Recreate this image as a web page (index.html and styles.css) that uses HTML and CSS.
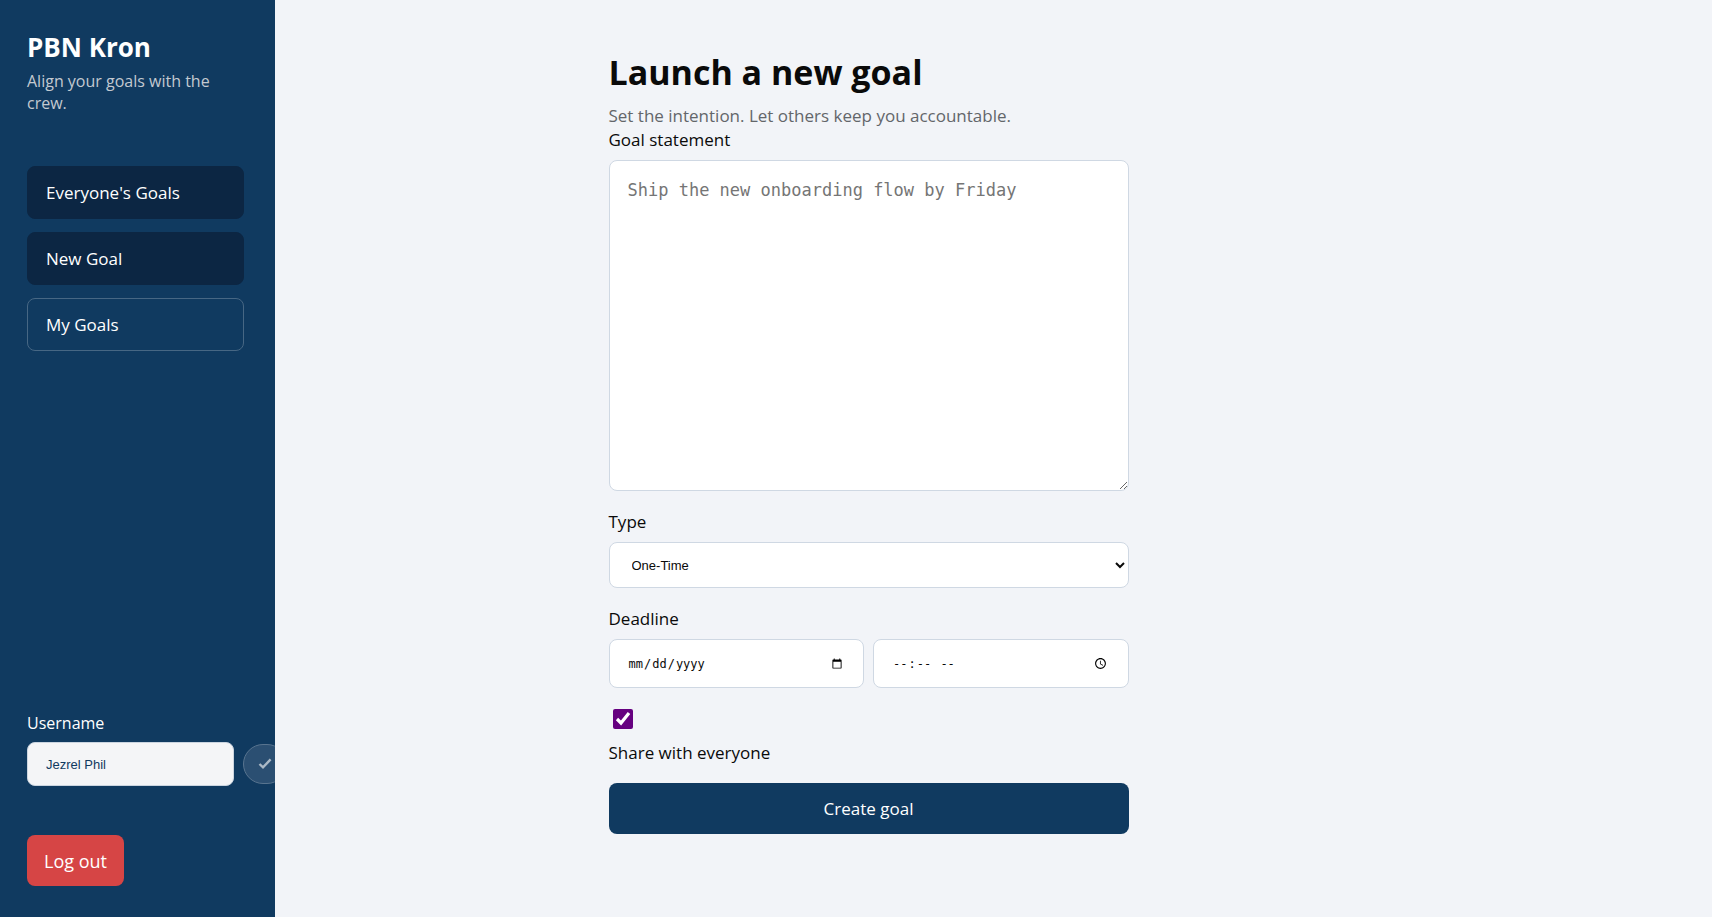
FILE: index.html
```html
<!DOCTYPE html>
<html lang="en">
<head>
<meta charset="utf-8">
<title>PBN Kron</title>
<link rel="stylesheet" href="styles.css">
</head>
<body>
<div class="app">
  <aside class="sidebar">
    <header class="brand">
      <h2 class="brand-name">PBN Kron</h2>
      <p class="brand-tagline">Align your goals with the crew.</p>
    </header>
    <nav class="nav">
      <a class="nav-link nav-link-filled" href="#everyone">Everyone's Goals</a>
      <a class="nav-link nav-link-filled" href="#new">New Goal</a>
      <a class="nav-link" href="#mine">My Goals</a>
    </nav>
    <div class="account">
      <label class="account-label" for="username">Username</label>
      <div class="account-row">
        <input class="account-input" id="username" type="text" value="Jezrel Phil">
        <button class="account-save" type="button" aria-label="Save username">
          <svg width="14" height="12" viewBox="0 0 14 12" fill="none" stroke="currentColor" stroke-width="2.4"><path d="M1.5 6 5 9.4 12.6 1.4"/></svg>
        </button>
      </div>
    </div>
    <button class="logout" type="button">Log out</button>
  </aside>
  <main class="main">
    <section class="content">
      <h1 class="title">Launch a new goal</h1>
      <p class="subtitle">Set the intention. Let others keep you accountable.</p>
      <form class="form">
        <div class="field">
          <label for="goal">Goal statement</label>
          <textarea class="control goal-text" id="goal" placeholder="Ship the new onboarding flow by Friday"></textarea>
        </div>
        <div class="field">
          <label for="type">Type</label>
          <select class="control type-select" id="type"><option>One-Time</option></select>
        </div>
        <div class="field">
          <label for="date">Deadline</label>
          <div class="deadline">
            <input class="control picker" id="date" type="date">
            <input class="control picker" type="time" aria-label="Deadline time">
          </div>
        </div>
        <div class="share">
          <input class="share-box" id="share" type="checkbox" checked>
          <label for="share">Share with everyone</label>
        </div>
        <button class="submit" type="button">Create goal</button>
      </form>
    </section>
  </main>
</div>
</body>
</html>
```
FILE: styles.css
```css
* { box-sizing: border-box; }

body {
  margin: 0;
  background: #f2f4f8;
  color: #0a0a0a;
  font: 17px/24px "Open Sans", "Noto Sans", sans-serif;
}

h1, h2, p { margin: 0; }
button { font: inherit; cursor: pointer; }

.app {
  display: grid;
  grid-template-columns: 275px 1fr;
  min-height: 100vh;
}

.sidebar {
  display: flex;
  flex-direction: column;
  overflow: hidden;
  padding: 31px 31px 31px 27px;
  background: #103a60;
  color: #fff;
}

.brand-name { font-size: 26px; line-height: 32px; }

.brand-tagline {
  margin-top: 7px;
  color: #c3c9d0;
  font-size: 16px;
  line-height: 22px;
}

.nav {
  display: flex;
  flex-direction: column;
  gap: 13px;
  margin-top: 52px;
}

.nav-link {
  padding: 14px 18px;
  border: 1px solid #476784;
  border-radius: 8px;
  color: #fff;
  line-height: 23px;
  text-decoration: none;
}

.nav-link-filled { background: #0c2643; border-color: #0c2643; }

.account { margin-top: auto; }

.account-label {
  display: block;
  margin-bottom: 7px;
  font-size: 16px;
}

.account-row {
  display: flex;
  align-items: center;
  gap: 9px;
}

.account-input {
  flex: none;
  width: 207px;
  height: 44px;
  padding: 0 18px;
  border: 1px solid #cbd5e0;
  border-radius: 8px;
  background: #f4f5f7;
  color: #103a60;
  font: 13px "Liberation Sans", Arial, sans-serif;
}

.account-save {
  display: flex;
  flex: none;
  align-items: center;
  justify-content: center;
  width: 44px;
  height: 40px;
  padding: 0;
  border: 1px solid #58748f;
  border-radius: 20px;
  background: #2b4f72;
  color: #abb9c6;
}

.logout {
  align-self: flex-start;
  height: 51px;
  margin-top: 49px;
  padding: 0 17px;
  border: 0;
  border-radius: 8px;
  background: #d64545;
  color: #fff;
  font-size: 18px;
}

.main { padding: 49px 32px; }

.content {
  max-width: 770px;
  margin: 0 auto;
}

.title { font-size: 34px; line-height: 46px; }
.subtitle { margin-top: 9px; color: #63666a; }

.form {
  display: flex;
  flex-direction: column;
  gap: 19px;
  max-width: 520px;
}

.field {
  display: flex;
  flex-direction: column;
  gap: 8px;
}

.control {
  width: 100%;
  border: 1px solid #cfd8e3;
  border-radius: 8px;
  background: #fff;
  color: #0a0a0a;
}

.goal-text {
  height: 331px;
  padding: 18px;
  font: 17px/22px "DejaVu Sans Mono", monospace;
  resize: vertical;
}

.goal-text::placeholder { color: #757575; }

.type-select {
  height: 46px;
  padding: 0 0 0 18px;
  font: 13px "Liberation Sans", Arial, sans-serif;
}

.deadline {
  display: grid;
  grid-template-columns: 1fr 1fr;
  gap: 9px;
}

.picker {
  height: 49px;
  padding: 0 18px;
  font: 12px "DejaVu Sans Mono", monospace;
}

.share {
  display: flex;
  flex-direction: column;
  align-items: flex-start;
  gap: 13px;
  padding-top: 2px;
  line-height: 22px;
}

.share-box {
  width: 20px;
  height: 20px;
  margin: 0 4px;
  accent-color: #660080;
}

.submit {
  height: 51px;
  border: 0;
  border-radius: 8px;
  background: #103a60;
  color: #fff;
}
```
